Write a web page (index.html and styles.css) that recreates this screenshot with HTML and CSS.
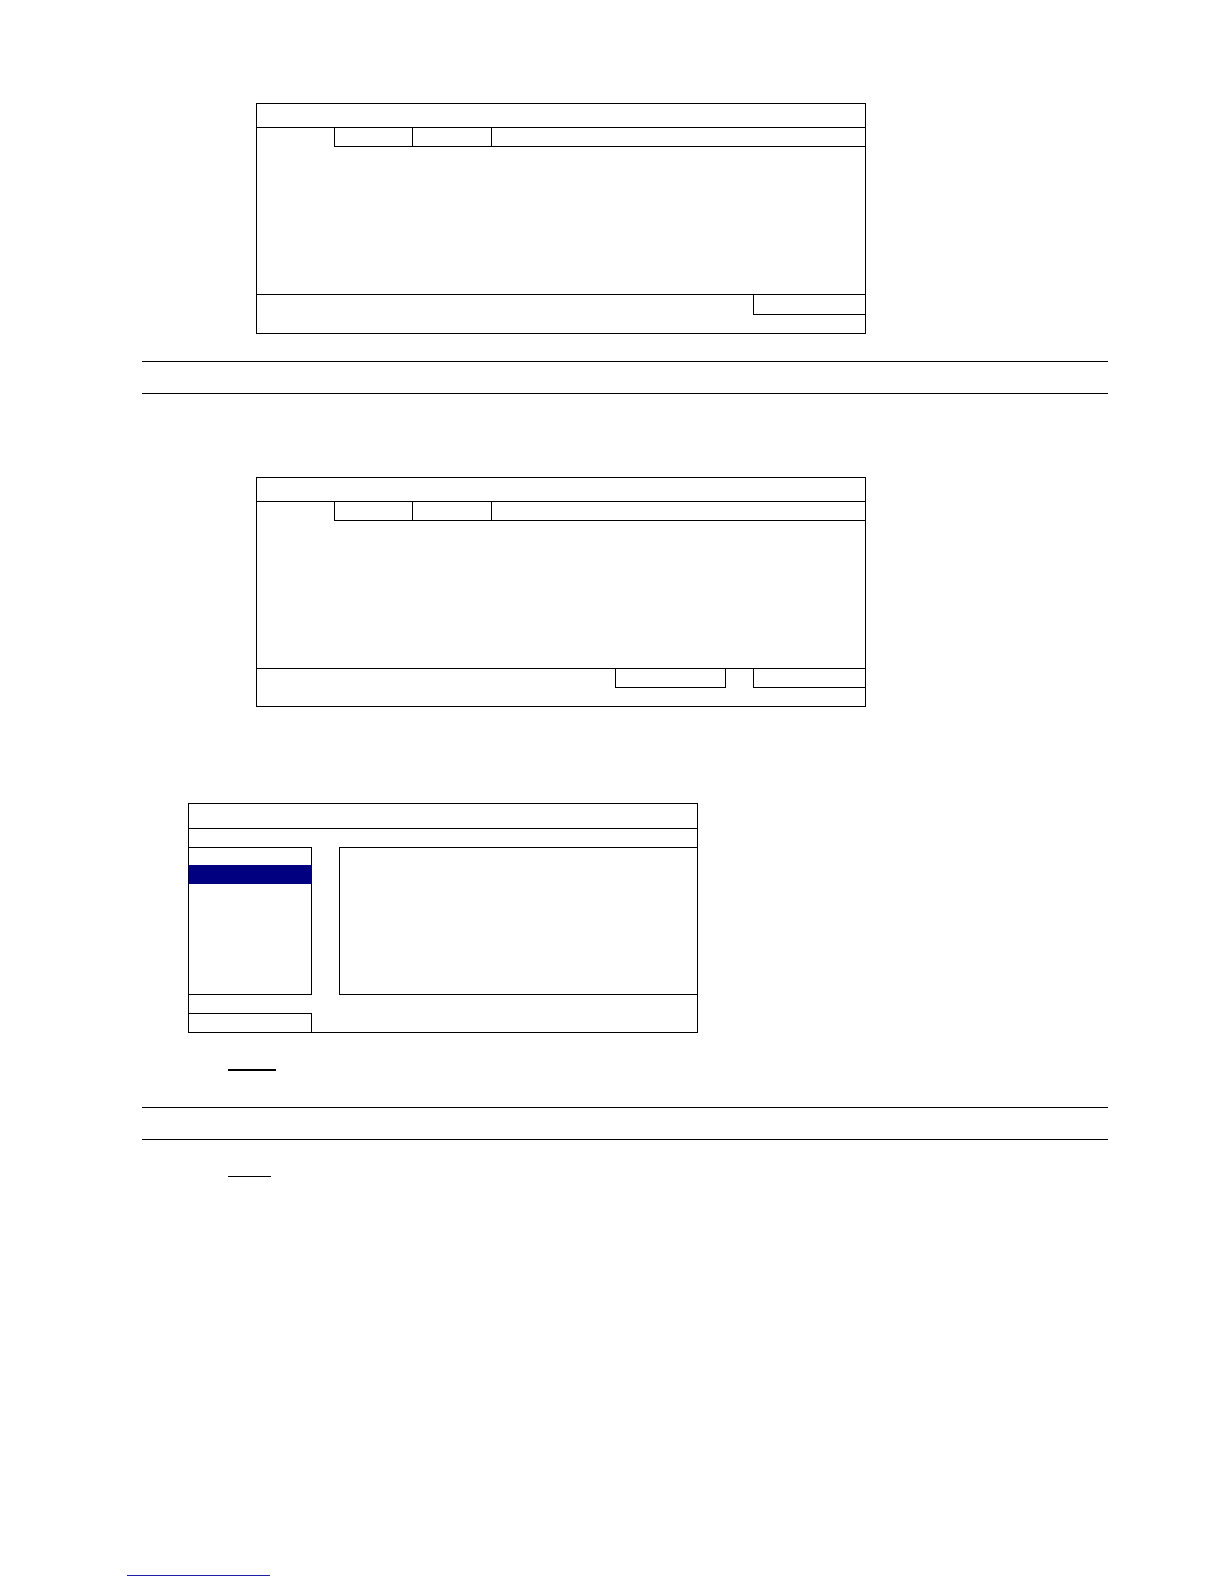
FILE: index.html
```html
<!DOCTYPE html>
<html lang="en">
<head>
<meta charset="utf-8">
<title>Dialogs</title>
<link rel="stylesheet" href="styles.css">
</head>
<body>
<main class="page">
  <section class="dlg dlg-a dlg-first">
    <div class="dlg-title"></div>
    <div class="tabs">
      <div class="tab-spacer"></div>
      <div class="tab tab-1"></div>
      <div class="tab tab-2"></div>
      <div class="tab tab-3"></div>
    </div>
    <div class="dlg-body"></div>
    <div class="dlg-foot">
      <div class="btn btn-b"></div>
    </div>
  </section>

  <hr class="rule rule-1">
  <hr class="rule rule-2">

  <section class="dlg dlg-a dlg-second">
    <div class="dlg-title"></div>
    <div class="tabs">
      <div class="tab-spacer"></div>
      <div class="tab tab-1"></div>
      <div class="tab tab-2"></div>
      <div class="tab tab-3"></div>
    </div>
    <div class="dlg-body"></div>
    <div class="dlg-foot foot-2">
      <div class="btn btn-a"></div>
      <div class="btn btn-b"></div>
    </div>
  </section>

  <section class="dlg dlg-c">
    <div class="dlg-title title-c"></div>
    <div class="gap-row"></div>
    <div class="panes">
      <div class="list">
        <div class="list-sel"></div>
      </div>
      <div class="detail"></div>
    </div>
    <div class="foot-c">
      <div class="btn-c"></div>
    </div>
  </section>

  <div class="uline uline-1"></div>
  <hr class="rule rule-3">
  <hr class="rule rule-4">
  <div class="uline uline-2"></div>
  <div class="link-line"></div>
</main>
</body>
</html>
```

FILE: styles.css
```css
* { box-sizing: border-box; }

html, body {
  margin: 0;
  padding: 0;
  background: #ffffff;
  font-family: "Liberation Sans", Arial, sans-serif;
}

.page {
  display: flex;
  flex-direction: column;
  align-items: flex-start;
  width: 1224px;
  min-height: 1584px;
}

/* dialog frames */
.dlg {
  border: 1px solid #000;
  display: flex;
  flex-direction: column;
  background: #fff;
}

.dlg-a {
  margin-left: 256px;
  width: 610px;
}
.dlg-first { margin-top: 103px; height: 231px; }
.dlg-second { margin-top: 83px; height: 230px; }

.dlg-title {
  height: 24px;
  border-bottom: 1px solid #000;
  flex: none;
}

.tabs {
  display: flex;
  height: 19px;
  flex: none;
}
.tab-spacer { width: 77px; flex: none; }
.tab {
  border-bottom: 1px solid #000;
  border-left: 1px solid #000;
}
.tab-1 { width: 78px; }
.tab-2 { width: 79px; }
.tab-3 { flex: 1; }

.dlg-body { height: 147px; flex: none; }

.dlg-foot {
  flex: 1;
  border-top: 1px solid #000;
  display: flex;
  justify-content: flex-end;
  align-items: flex-start;
  gap: 27px;
}
.btn {
  border-left: 1px solid #000;
  border-bottom: 1px solid #000;
}
.btn-b { width: 112px; height: 20px; }
.foot-2 .btn-b { height: 19px; }
.btn-a {
  width: 111px;
  height: 19px;
  border-right: 1px solid #000;
}

/* list dialog */
.dlg-c {
  margin-top: 96px;
  margin-left: 188px;
  width: 510px;
  height: 230px;
}
.title-c { height: 25px; }
.gap-row { height: 18px; flex: none; }
.panes {
  display: flex;
  gap: 27px;
  height: 148px;
  flex: none;
}
.list {
  width: 123px;
  border-top: 1px solid #000;
  border-right: 1px solid #000;
  border-bottom: 1px solid #000;
  padding-top: 17px;
}
.list-sel {
  height: 19px;
  background: #000080;
  margin-right: -1px;
}
.detail {
  flex: 1;
  border-top: 1px solid #000;
  border-left: 1px solid #000;
  border-bottom: 1px solid #000;
}
.foot-c {
  flex: 1;
  display: flex;
  flex-direction: column;
  justify-content: flex-end;
}
.btn-c {
  width: 123px;
  height: 19px;
  border-top: 1px solid #000;
  border-right: 1px solid #000;
}

/* rules */
.rule {
  margin: 0 0 0 142px;
  width: 966px;
  height: 0;
  border: 0;
  border-top: 1px solid #000;
}
.rule-1 { margin-top: 27px; }
.rule-2 { margin-top: 31px; }
.rule-3 { margin-top: 36px; }
.rule-4 { margin-top: 31px; }

.uline { margin-left: 228px; background: #000; }
.uline-1 { margin-top: 36px; width: 48px; height: 2px; }
.uline-2 { margin-top: 36px; width: 43px; height: 1px; }

.link-line {
  margin-top: 398px;
  margin-left: 127px;
  width: 143px;
  height: 1px;
  background: #1f1fa6;
}
```
